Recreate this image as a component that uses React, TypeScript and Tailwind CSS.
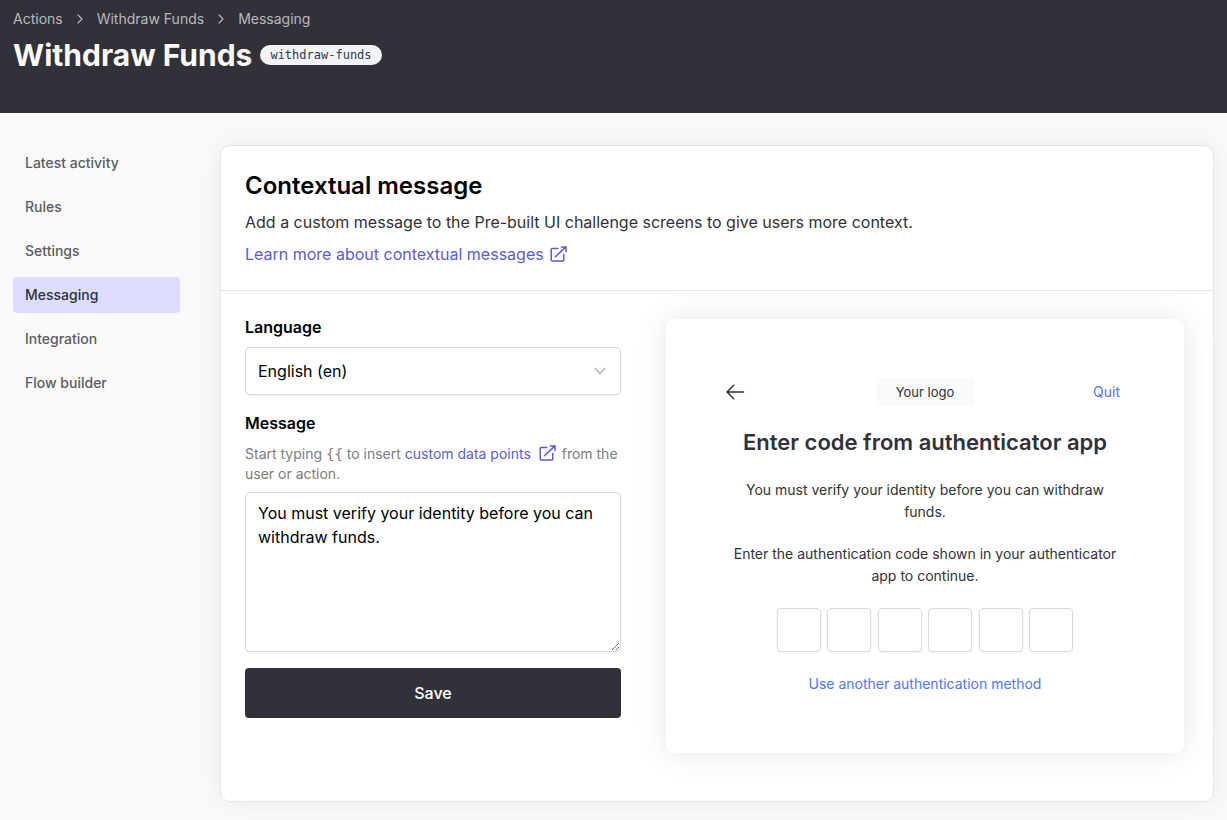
import { useState } from "react";

const crumbs = ["Actions", "Withdraw Funds", "Messaging"];
const sections = ["Latest activity", "Rules", "Settings", "Messaging", "Integration", "Flow builder"];
const digits = [1, 2, 3, 4, 5, 6];

function ChevronRight() {
  return (
    <svg viewBox="0 0 8 10" className="h-[10px] w-2" fill="none" stroke="currentColor" strokeWidth="1.1" strokeLinecap="round" strokeLinejoin="round" aria-hidden="true">
      <path d="M2 1 6 5 2 9" />
    </svg>
  );
}

function ExternalLink() {
  return (
    <svg viewBox="0 0 17 16" className="inline-block h-4 w-[17px] align-[-2px]" fill="none" stroke="currentColor" strokeWidth="1.5" strokeLinecap="round" strokeLinejoin="round" aria-hidden="true">
      <path d="M7.8 2.5H2.2a1 1 0 0 0-1 1v10.6a1 1 0 0 0 1 1h10.6a1 1 0 0 0 1-1V8.5" />
      <path d="M5.4 10.7 16 .9M11.4.9H16v4.6" />
    </svg>
  );
}

function Header() {
  return (
    <header className="flex h-[113px] flex-col bg-[#313139] px-[13px] pt-[9px]">
      <nav aria-label="Breadcrumb">
        <ol className="flex items-center text-sm leading-5 text-[#b9b9be]">
          {crumbs.map((crumb, i) => (
            <li key={crumb} className="flex items-center">
              {i > 0 && <span className="px-[13px]"><ChevronRight /></span>}
              <a href="#">{crumb}</a>
            </li>
          ))}
        </ol>
      </nav>
      <div className="mt-1 flex items-center gap-2">
        <h1 className="text-3xl leading-[44px] font-bold text-[#fbfaf7]">Withdraw Funds</h1>
        <code className="rounded-full bg-[#f2f3f6] px-[10px] font-['DejaVu_Sans_Mono',monospace] text-xs leading-5 text-[#333a4a]">
          withdraw-funds
        </code>
      </div>
    </header>
  );
}

function Sidebar() {
  return (
    <nav aria-label="Action sections" className="w-[167px] shrink-0">
      <ul className="flex flex-col gap-2">
        {sections.map((name) => (
          <li key={name}>
            <a
              href="#"
              aria-current={name === "Messaging" ? "page" : undefined}
              className="block rounded-[4px] px-3 py-2 text-sm leading-5 font-medium text-[#5c5c62] aria-[current=page]:bg-[#dddcfc] aria-[current=page]:text-[#313139]"
            >
              {name}
            </a>
          </li>
        ))}
      </ul>
    </nav>
  );
}

function Preview({ message }: { message: string }) {
  return (
    <section aria-label="Preview" className="mt-1 rounded-lg bg-white px-[60px] pt-[59px] pb-[58px] text-center text-[#313139] shadow-[0_0_32px_rgba(0,0,0,0.10)]">
      <div className="grid grid-cols-3 items-center">
        <button type="button" aria-label="Back" className="justify-self-start">
          <svg viewBox="0 0 20 16" className="h-4 w-5" fill="none" stroke="currentColor" strokeWidth="1.5" strokeLinecap="round" strokeLinejoin="round" aria-hidden="true">
            <path d="M17.5 8H1M7.7 1.2 1 8l6.7 6.8" />
          </svg>
        </button>
        <span className="justify-self-center bg-[#f9fafc] px-5 text-[13px] leading-7">Your logo</span>
        <a href="#" className="justify-self-end pr-1 text-sm text-[#4d77f3]">Quit</a>
      </div>
      <h3 className="mt-5 text-[22px] leading-8 font-semibold">Enter code from authenticator app</h3>
      <p className="mt-[21px] text-sm leading-[22px]">{message}</p>
      <p className="mt-5 text-sm leading-[22px]">Enter the authentication code shown in your authenticator app to continue.</p>
      <div className="mx-auto mt-[21px] flex w-[296px] justify-between">
        {digits.map((n) => (
          <input key={n} aria-label={`Digit ${n}`} maxLength={1} className="size-11 rounded-[4px] border border-[#d9d9e0] text-center shadow-xs" />
        ))}
      </div>
      <a href="#" className="mt-[21px] inline-block text-sm leading-[22px] text-[#4d77f3]">Use another authentication method</a>
    </section>
  );
}

export default function App() {
  const [message, setMessage] = useState("You must verify your identity before you can withdraw funds.");
  return (
    <div className="min-h-screen bg-[#f9f9f9] font-[Inter,sans-serif] text-black">
      <Header />
      <div className="flex items-start gap-10 px-[13px] pt-8 pb-[18px]">
        <Sidebar />
        <main className="min-w-0 flex-1 rounded-[10px] border border-[#e4e4e7] bg-white shadow-[0_0_24px_rgba(0,0,0,0.06)]">
          <div className="border-b border-[#e4e4e7] p-6">
            <h2 className="text-2xl leading-8 font-semibold">Contextual message</h2>
            <p className="mt-2 text-base leading-6 text-[#313139]">Add a custom message to the Pre-built UI challenge screens to give users more context.</p>
            <a href="#" className="mt-2 inline-block text-base leading-6 text-[#5b5bd6]">
              Learn more about contextual messages <span className="ml-[2px]"><ExternalLink /></span>
            </a>
          </div>
          <div className="grid grid-cols-[376fr_518fr] items-start gap-[45px] pt-6 pr-[29px] pb-12 pl-6">
            <form className="flex flex-col" onSubmit={(e) => e.preventDefault()}>
              <label htmlFor="language" className="text-base leading-6 font-semibold">Language</label>
              <div className="relative mt-2">
                <select id="language" className="h-12 w-full appearance-none rounded-[5px] border border-[#d5d5df] bg-white px-3 text-base shadow-xs">
                  <option>English (en)</option>
                </select>
                <svg viewBox="0 0 12 8" className="pointer-events-none absolute top-5 right-[15px] h-2 w-3" fill="none" stroke="#a3a3a8" strokeWidth="1.1" strokeLinecap="round" strokeLinejoin="round" aria-hidden="true">
                  <path d="M1 1.2 6 6.6l5-5.4" />
                </svg>
              </div>
              <label htmlFor="message" className="mt-4 text-base leading-6 font-semibold">Message</label>
              <p className="mt-[9px] text-sm leading-5 text-[#7c7c82]">
                Start typing <code className="font-['DejaVu_Sans_Mono',monospace]">{"{{"}</code> to insert{" "}
                <a href="#" className="text-[#5b5bd6]">custom data points <span className="mr-[2px] ml-1"><ExternalLink /></span></a> from the user or action.
              </p>
              <textarea
                id="message"
                value={message}
                onChange={(e) => setMessage(e.target.value)}
                className="mt-2 h-40 w-full rounded-[5px] border border-[#d5d5df] bg-white px-3 py-2 text-base leading-6 shadow-xs"
              />
              <button type="submit" className="mt-4 h-[50px] rounded-[4px] bg-[#313139] text-base font-medium text-white">Save</button>
            </form>
            <Preview message={message} />
          </div>
        </main>
      </div>
    </div>
  );
}
